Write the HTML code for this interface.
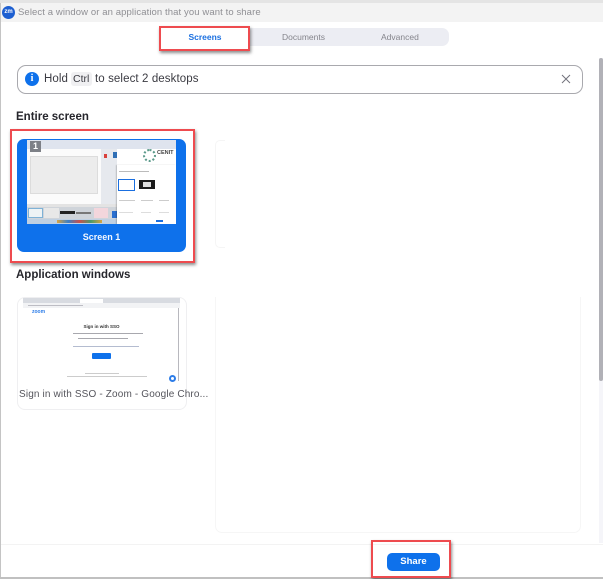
<!DOCTYPE html>
<html><head><meta charset="utf-8">
<style>
html,body{margin:0;padding:0;background:#fff}
body{width:614px;height:579px;position:relative;overflow:hidden;font-family:"Liberation Sans",sans-serif}
.a{position:absolute}
.t{position:absolute;white-space:nowrap}
.red{position:absolute;box-sizing:border-box;border:2px solid #ee4b4f;box-shadow:1px 2px 3px rgba(0,0,0,.45)}
</style></head>
<body>
<!-- window frame -->
<div class="a" style="left:0;top:0;width:603px;height:3px;background:#e4e4e4"></div>
<div class="a" style="left:0;top:3px;width:603px;height:19px;background:#f3f3f3"></div>
<div class="a" style="left:0;top:3px;width:1px;height:574px;background:#c4c4c4"></div>
<div class="a" style="left:0;top:577px;width:603px;height:2px;background:#c0c0c0"></div>
<div class="a" style="left:2px;top:6px;width:13px;height:13px;border-radius:50%;background:#1d5fd1;color:#fff;font-size:6px;font-weight:bold;line-height:13px;text-align:center">zm</div>
<div class="t" style="left:18px;top:6px;font-size:9.5px;line-height:13px;color:#8f8f94;letter-spacing:.1px">Select a window or an application that you want to share</div>

<!-- tabs -->
<div class="a" style="left:160px;top:28px;width:289px;height:18px;background:#ecedf3;border-radius:7px"></div>
<div class="a" style="left:160px;top:28px;width:90px;height:18px;background:#fff"></div>
<div class="t" style="left:160px;top:31px;width:90px;text-align:center;font-size:8.5px;line-height:12px;font-weight:bold;color:#1a6fe0">Screens</div>
<div class="t" style="left:282px;top:31px;font-size:8.5px;line-height:12px;color:#85858c">Documents</div>
<div class="t" style="left:381px;top:31px;font-size:8.5px;line-height:12px;color:#85858c">Advanced</div>
<div class="red" style="left:159px;top:26px;width:91px;height:25px"></div>

<!-- banner -->
<div class="a" style="left:17px;top:65px;width:566px;height:29px;box-sizing:border-box;border:1px solid #a9a9ae;border-radius:9px;background:#fff"></div>
<div class="a" style="left:25px;top:72px;width:14px;height:14px;border-radius:50%;background:#0e71eb;color:#fff;font:bold 10px/14px 'Liberation Serif',serif;text-align:center">i</div>
<div class="t" style="left:44px;top:72px;font-size:11.5px;line-height:15px;color:#3b3b42;letter-spacing:.1px">Hold</div>
<div class="a" style="left:71px;top:72px;width:21px;height:14px;border-radius:3px;background:#f0f0f2"></div>
<div class="t" style="left:73px;top:72px;font-size:10.5px;line-height:15px;color:#3b3b42">Ctrl</div>
<div class="t" style="left:95px;top:72px;font-size:11.5px;line-height:15px;color:#3b3b42;letter-spacing:.1px">to select 2 desktops</div>
<svg class="a" style="left:561px;top:74px" width="10" height="10" viewBox="0 0 10 10"><path d="M1 1L9 9M9 1L1 9" stroke="#73737c" stroke-width="1" fill="none"/></svg>

<!-- scrollbar -->
<div class="a" style="left:599px;top:58px;width:4px;height:485px;background:#f5f5f9"></div>
<div class="a" style="left:599px;top:58px;width:4px;height:323px;background:#b1b1b7;border-radius:2px"></div>

<!-- headings -->
<div class="t" style="left:16px;top:110px;font-size:11.5px;line-height:15px;font-weight:bold;color:#26262c">Entire screen</div>
<div class="t" style="left:16px;top:268px;font-size:11.5px;line-height:15px;font-weight:bold;color:#26262c">Application windows</div>

<!-- screen card -->
<div class="a" style="left:17px;top:139px;width:169px;height:113px;background:#0e71eb;border-radius:7px"></div>
<div class="a" style="left:27px;top:140px;width:149px;height:84px;background:#f2f3f6;overflow:hidden">
  <div class="a" style="left:0;top:0;width:149px;height:9px;background:#dfe4ee"></div>
  <div class="a" style="left:0;top:9px;width:74px;height:55px;background:#fbfbfb"></div>
  <div class="a" style="left:3px;top:16px;width:68px;height:38px;background:#ececec;border:1px solid #dcdcdc;box-sizing:border-box"></div>
  <div class="a" style="left:3px;top:1px;width:11px;height:11px;background:#7d8087;color:#fff;font:bold 9px/11px 'Liberation Sans',sans-serif;text-align:center">1</div>
  <div class="a" style="left:74px;top:9px;width:16px;height:55px;background:#e6e9ee"></div>
  <div class="a" style="left:77px;top:14px;width:3px;height:4px;background:#d9413c"></div>
  <div class="a" style="left:86px;top:12px;width:5px;height:6px;background:#2f6fb5"></div>
  <div class="a" style="left:92px;top:12px;width:4px;height:5px;background:#e2a0a0"></div>
  <div class="a" style="left:0;top:64px;width:90px;height:3px;background:#e3e3e3"></div>
  <div class="a" style="left:0;top:67px;width:90px;height:12px;background:#cfd4da"></div>
  <div class="a" style="left:1px;top:68px;width:15px;height:10px;background:#eef3f5;box-sizing:border-box;border:1px solid #7fb2d6"></div>
  <div class="a" style="left:17px;top:68px;width:15px;height:10px;background:#e8e8e8"></div>
  <div class="a" style="left:33px;top:71px;width:15px;height:3px;background:#222"></div>
  <div class="a" style="left:49px;top:72px;width:15px;height:2px;background:#777"></div>
  <div class="a" style="left:67px;top:68px;width:14px;height:10px;background:#f3d6dc"></div>
  <div class="a" style="left:85px;top:71px;width:6px;height:7px;background:#2a6fd0"></div>
  <div class="a" style="left:0;top:79px;width:149px;height:5px;background:#bfd0e2"></div>
  <div class="a" style="left:30px;top:80px;width:45px;height:3px;background:linear-gradient(90deg,#d9a441,#3d7fc4,#c9504c,#4a9a6a,#d9a441)"></div>
  <div class="a" style="left:90px;top:9px;width:59px;height:17px;background:#fff"></div>
  <div class="a" style="left:116px;top:9px;width:13px;height:13px;box-sizing:border-box;border:2px dotted #5d9b8c;border-radius:50%"></div>
  <div class="t" style="left:130px;top:9px;font-size:5.5px;line-height:8px;font-weight:bold;color:#444">CENIT</div>
  <div class="a" style="left:90px;top:25px;width:59px;height:59px;background:#fff;box-shadow:-1px 0 1px rgba(0,0,0,.2)"></div>
  <div class="a" style="left:92px;top:31px;width:30px;height:1px;background:#bbb"></div>
  <div class="a" style="left:91px;top:39px;width:17px;height:12px;box-sizing:border-box;border:1px solid #1a6fe0;background:#fff"></div>
  <div class="a" style="left:112px;top:40px;width:16px;height:9px;background:#1a1a1a"></div>
  <div class="a" style="left:116px;top:42px;width:8px;height:5px;background:#ddd"></div>
  <div class="a" style="left:92px;top:60px;width:16px;height:1px;background:#ccc"></div>
  <div class="a" style="left:114px;top:60px;width:12px;height:1px;background:#ccc"></div>
  <div class="a" style="left:132px;top:60px;width:10px;height:1px;background:#ccc"></div>
  <div class="a" style="left:92px;top:72px;width:14px;height:1px;background:#ddd"></div>
  <div class="a" style="left:114px;top:72px;width:10px;height:1px;background:#ddd"></div>
  <div class="a" style="left:132px;top:72px;width:10px;height:1px;background:#ddd"></div>
  <div class="a" style="left:129px;top:80px;width:7px;height:2px;background:#1a6fe0"></div>
</div>
<div class="t" style="left:17px;top:230px;width:169px;text-align:center;font-size:9px;line-height:14px;font-weight:bold;color:#f2f7ff">Screen 1</div>
<div class="red" style="left:10px;top:129px;width:185px;height:134px"></div>

<!-- faint second column -->
<div class="a" style="left:215px;top:140px;width:10px;height:108px;box-sizing:border-box;border:1px solid #f5f5f5;border-right:0;border-radius:5px 0 0 5px"></div>
<div class="a" style="left:215px;top:297px;width:366px;height:236px;box-sizing:border-box;border:1px solid #f6f6f6;border-top:0;border-radius:0 0 7px 7px"></div>

<!-- app card -->
<div class="a" style="left:17px;top:297px;width:170px;height:113px;box-sizing:border-box;border:1px solid #efeff1;border-radius:8px;background:#fff"></div>
<div class="a" style="left:23px;top:298px;width:157px;height:84px;background:#fff;overflow:hidden">
  <div class="a" style="left:0;top:0;width:157px;height:5px;background:#d8dbe1"></div>
  <div class="a" style="left:57px;top:1px;width:23px;height:4px;background:#fff"></div>
  <div class="a" style="left:0;top:5px;width:157px;height:5px;background:#f2f3f5"></div>
  <div class="a" style="left:5px;top:7px;width:55px;height:1px;background:#bdbdc4"></div>
  <div class="a" style="left:155px;top:10px;width:1px;height:73px;background:#b8b8be"></div>
  <div class="t" style="left:9px;top:11px;font-size:5px;line-height:7px;font-weight:bold;color:#2d7de8">zoom</div>
  <div class="t" style="left:0;top:25px;width:157px;text-align:center;font-size:4.5px;line-height:7px;font-weight:bold;color:#333">Sign in with SSO</div>
  <div class="a" style="left:50px;top:35px;width:70px;height:1px;background:#a8a8ae"></div>
  <div class="a" style="left:55px;top:40px;width:50px;height:1px;background:#a8a8ae"></div>
  <div class="a" style="left:50px;top:48px;width:66px;height:1px;background:#b4bcd0"></div>
  <div class="a" style="left:69px;top:55px;width:19px;height:6px;background:#0e71eb;border-radius:1px"></div>
  <div class="a" style="left:62px;top:75px;width:34px;height:1px;background:#ccc"></div>
  <div class="a" style="left:44px;top:78px;width:80px;height:1px;background:#ccc"></div>
  <div class="a" style="left:146px;top:77px;width:7px;height:7px;box-sizing:border-box;border:2px solid #2d7de8;border-radius:50%;background:#fff"></div>
</div>
<div class="t" style="left:19px;top:388px;font-size:10px;line-height:14px;color:#55555c;letter-spacing:.15px">Sign in with SSO - Zoom - Google Chro...</div>

<!-- footer -->
<div class="a" style="left:1px;top:544px;width:602px;height:1px;background:#f3f3f3"></div>
<div class="a" style="left:387px;top:553px;width:53px;height:18px;background:#0e71eb;border-radius:5px;color:#fff;font-size:9.5px;line-height:18px;font-weight:bold;text-align:center">Share</div>
<div class="red" style="left:371px;top:540px;width:80px;height:38px"></div>
</body></html>
